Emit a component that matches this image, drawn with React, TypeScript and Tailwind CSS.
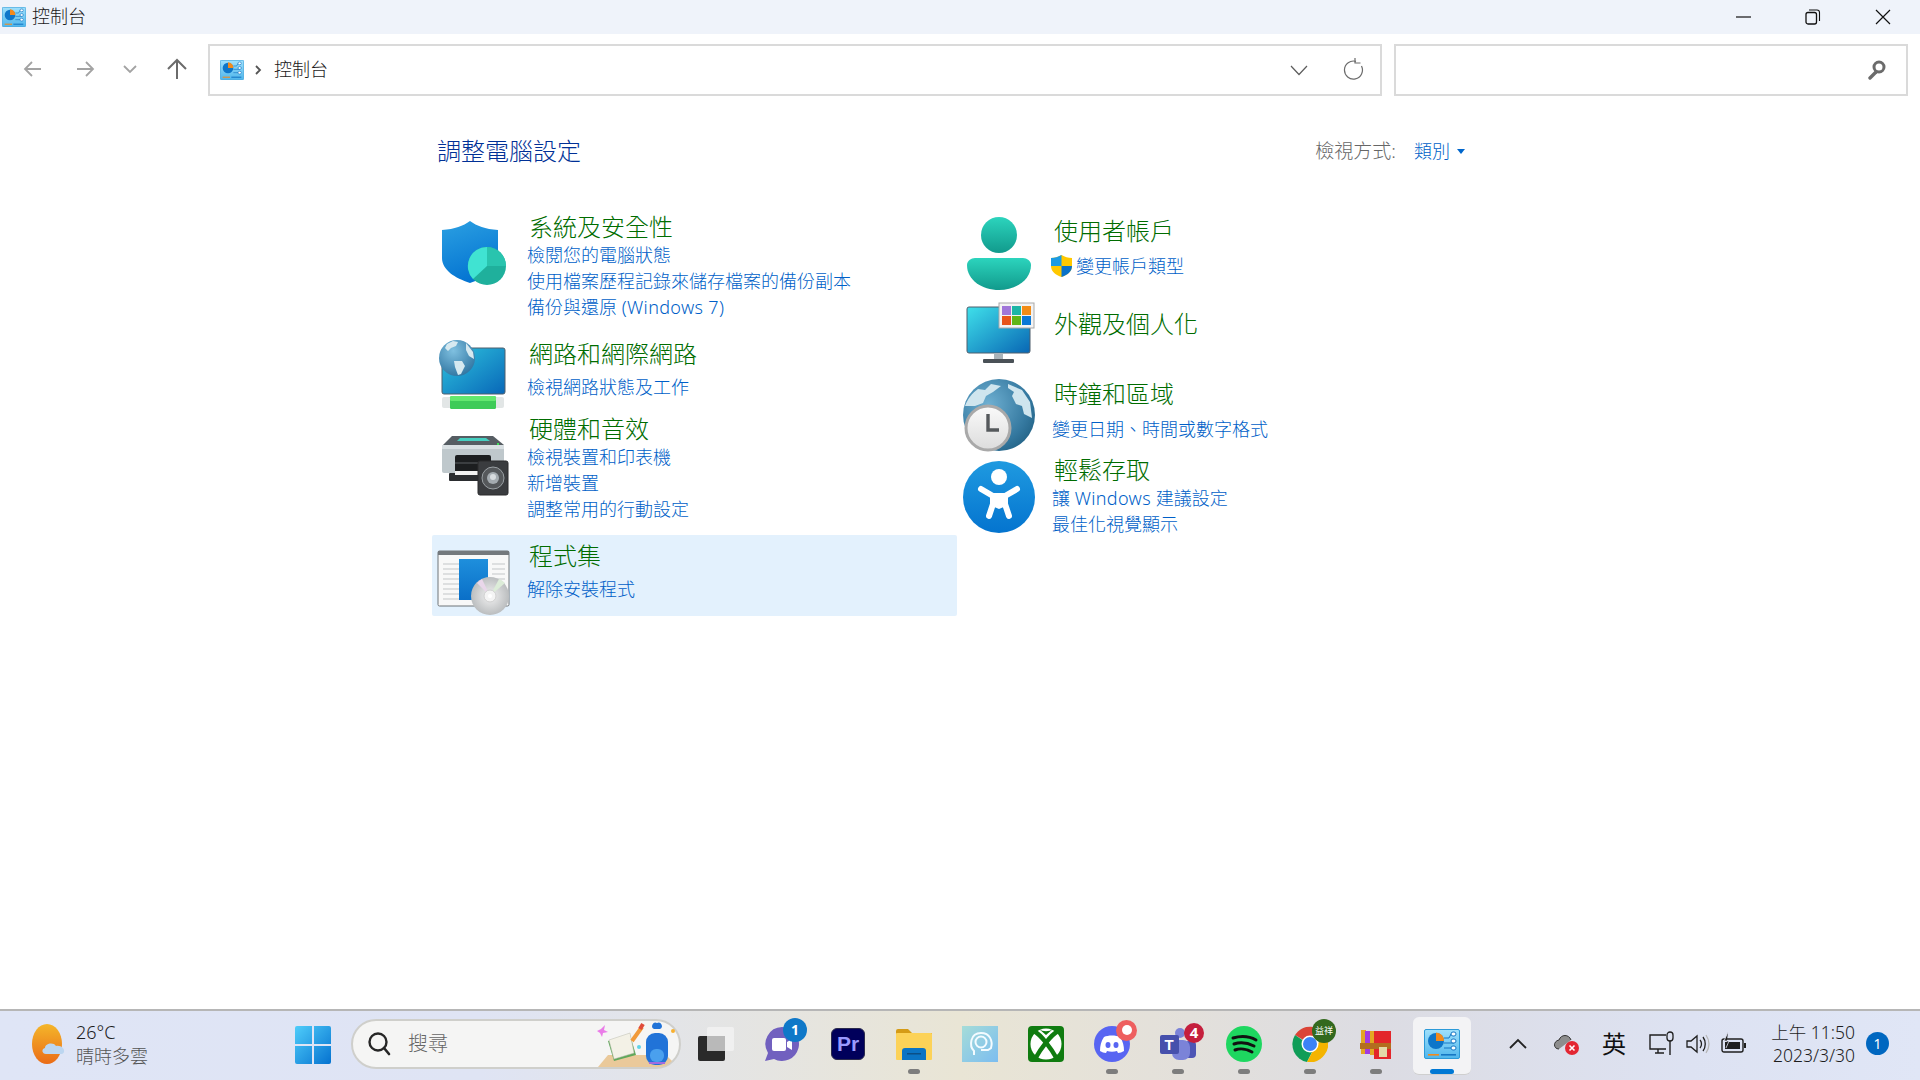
const CP = ({ w = 24, h = 20 }: { w?: number; h?: number }) => (
  <svg width={w} height={h} viewBox="0 0 36 30">
    <defs>
      <linearGradient id="cp" x1="0" y1="0" x2="0" y2="1">
        <stop offset="0" stopColor="#9fe0fb" />
        <stop offset="1" stopColor="#4fb6ec" />
      </linearGradient>
    </defs>
    <rect x="0.5" y="0.5" width="35" height="29" rx="1.5" fill="url(#cp)" stroke="#2c9ad8" />
    <circle cx="12" cy="12" r="8" fill="#0e76c9" />
    <path d="M12 12V3.5A8 8 0 0 1 20 12Z" fill="#f28a1c" />
    <path d="M20 9h5l2-4h3M20 14h10M20 19h10" stroke="#1677c4" strokeWidth="1" fill="none" />
    <rect x="27" y="3" width="5" height="4" rx="2" fill="#fff" stroke="#1677c4" />
    <rect x="27" y="10" width="5" height="4" rx="2" fill="#fff" stroke="#1677c4" />
    <rect x="27" y="17" width="5" height="4" rx="2" fill="#fff" stroke="#1677c4" />
    <rect x="4" y="25" width="11" height="1.6" fill="#f28a1c" />
    <rect x="17" y="25" width="15" height="1.6" fill="#1677c4" />
  </svg>
);

const ShieldIcon = () => (
  <svg width="66" height="68" viewBox="0 0 66 68" className="block ml-[9px] mt-[9px]">
    <defs>
      <linearGradient id="sh" x1="0" y1="0" x2="0.3" y2="1">
        <stop offset="0" stopColor="#2ba0e2" />
        <stop offset="1" stopColor="#0575d2" />
      </linearGradient>
    </defs>
    <path d="M29 1C36 6 44 9 57 10V38C57 50 44 58 29 63C14 58 1 50 1 38V10C14 9 22 6 29 1Z" fill="url(#sh)" />
    <circle cx="46" cy="46" r="19" fill="#1fb09c" />
    <path d="M46 46V27A19 19 0 0 1 65 46Z" fill="#29c4ae" />
    <path d="M46 46V27A19 19 0 0 0 32 59Z" fill="#40e3d2" />
  </svg>
);

const NetworkIcon = () => (
  <svg width="72" height="72" viewBox="0 0 72 72" className="block ml-[6px] mt-[1px]">
    <defs>
      <linearGradient id="nt" x1="0" y1="0" x2="1" y2="1">
        <stop offset="0" stopColor="#2fc4de" />
        <stop offset="1" stopColor="#0867b8" />
      </linearGradient>
      <radialGradient id="gl1" cx="0.4" cy="0.3" r="0.8">
        <stop offset="0" stopColor="#7fc0e0" />
        <stop offset="1" stopColor="#2a6f9c" />
      </radialGradient>
    </defs>
    <rect x="4" y="9" width="63" height="46" rx="2" fill="url(#nt)" stroke="#4f5f6c" />
    <rect x="4" y="58" width="62" height="11" rx="2" fill="#e2e6e6" />
    <rect x="12" y="57" width="46" height="13" rx="1.5" fill="#3ecb58" />
    <rect x="12" y="57" width="46" height="5" rx="1.5" fill="#63e86f" />
    <circle cx="19" cy="19" r="18" fill="url(#gl1)" />
    <path d="M9 5l6-3 5 1-2 4-5 2-3 3-3-3zM28 4l7 9 1 7-5-3-3-6zM16 22l8 0 3 5-4 8-3 1-3-8z" fill="#d6e9f0" />
  </svg>
);

const HardwareIcon = () => (
  <svg width="72" height="62" viewBox="0 0 72 62" className="block ml-[9px] mt-[22px]">
    <path d="M2 10L11 1H52L63 10Z" fill="#565d63" />
    <path d="M16 6l3-3h26l4 3z" fill="#45cfc0" />
    <rect x="1" y="10" width="62" height="28" rx="2" fill="#bfc8cc" />
    <rect x="1" y="10" width="62" height="4" fill="#d9e0e3" />
    <rect x="56" y="8" width="2" height="2" fill="#3fdc5b" />
    <rect x="14" y="20" width="36" height="22" rx="2" fill="#1c1e20" />
    <rect x="14" y="27" width="36" height="2" fill="#3b3e41" />
    <rect x="8" y="38" width="50" height="8" rx="1" fill="#2b2d30" />
    <rect x="14" y="36" width="36" height="4" fill="#f2f2f2" />
    <rect x="37" y="26" width="30" height="34" rx="2" fill="#3a3c3f" stroke="#2a2b2d" />
    <circle cx="52" cy="43" r="11" fill="#55585b" stroke="#9aa0a4" strokeWidth="1" />
    <circle cx="52" cy="43" r="6" fill="#a4abb0" />
    <circle cx="52" cy="42" r="3" fill="#d7dbde" />
  </svg>
);

const ProgramsIcon = () => (
  <svg width="74" height="66" viewBox="0 0 74 66" className="block ml-[5px] mt-[10px]">
    <defs>
      <linearGradient id="pg" x1="0" y1="0" x2="0" y2="1">
        <stop offset="0" stopColor="#1e8fdc" />
        <stop offset="1" stopColor="#0a6fc8" />
      </linearGradient>
      <radialGradient id="cd" cx="0.5" cy="0.5" r="0.6">
        <stop offset="0" stopColor="#f2f2f2" />
        <stop offset="1" stopColor="#b0b3b5" />
      </radialGradient>
    </defs>
    <rect x="1" y="1" width="71" height="55" rx="1.5" fill="#f8f8f8" stroke="#6f7478" />
    <rect x="1" y="1" width="71" height="4" fill="#74797d" />
    <path d="M6 14h16M6 19h16M6 24h16M6 29h16M6 34h16M6 39h16M6 44h16M6 49h16M55 14h13M55 19h13M55 24h13M55 29h13M55 34h13" stroke="#c3c6c8" strokeWidth="1" />
    <rect x="22" y="9" width="29" height="41" fill="url(#pg)" />
    <circle cx="53" cy="46" r="19" fill="url(#cd)" />
    <path d="M53 46L40 33A19 19 0 0 1 45 29Z" fill="#e9d7ea" />
    <path d="M53 46L68 33A19 19 0 0 0 62 29Z" fill="#dcecd8" />
    <circle cx="53" cy="46" r="6" fill="#f4f4f4" stroke="#d0d0d0" />
    <circle cx="53" cy="46" r="2" fill="#fff" />
  </svg>
);

const UserIcon = () => (
  <svg width="66" height="74" viewBox="0 0 66 74" className="block ml-[10px] mt-[2px]">
    <defs>
      <linearGradient id="us" x1="0" y1="0" x2="0" y2="1">
        <stop offset="0" stopColor="#2cd4bd" />
        <stop offset="1" stopColor="#119a8c" />
      </linearGradient>
    </defs>
    <circle cx="33" cy="18" r="18" fill="url(#us)" />
    <path d="M9 41H57C61 41 65 44 65 48C65 63 50 73 33 73C16 73 1 63 1 48C1 44 5 41 9 41Z" fill="url(#us)" />
  </svg>
);

const AppearanceIcon = () => (
  <svg width="72" height="64" viewBox="0 0 72 64" className="block ml-[10px] -mt-[6px]">
    <defs>
      <linearGradient id="ap" x1="0" y1="0" x2="1" y2="1">
        <stop offset="0" stopColor="#3fe0ea" />
        <stop offset="1" stopColor="#0866b4" />
      </linearGradient>
    </defs>
    <rect x="1" y="5" width="63" height="46" rx="2" fill="url(#ap)" stroke="#4f5f6c" />
    <rect x="28" y="51" width="9" height="7" fill="#a9b3b9" />
    <rect x="17" y="57" width="31" height="4" rx="1" fill="#4a5157" />
    <rect x="33" y="1" width="35" height="25" fill="#f3f3f3" stroke="#a9a9a9" />
    <rect x="36" y="4" width="9" height="9" fill="#a076d9" />
    <rect x="46" y="4" width="9" height="9" fill="#1cb5a6" />
    <rect x="56" y="4" width="9" height="9" fill="#f28c16" />
    <rect x="36" y="14" width="9" height="9" fill="#e8541a" />
    <rect x="46" y="14" width="9" height="9" fill="#5fb516" />
    <rect x="56" y="14" width="9" height="9" fill="#0a78d6" />
  </svg>
);

const ClockIcon = () => (
  <svg width="74" height="74" viewBox="0 0 74 74" className="block ml-[6px]">
    <defs>
      <radialGradient id="gl2" cx="0.35" cy="0.35" r="0.8">
        <stop offset="0" stopColor="#6fb0d2" />
        <stop offset="0.7" stopColor="#34789f" />
        <stop offset="1" stopColor="#1f5d80" />
      </radialGradient>
      <linearGradient id="cf" x1="0" y1="0" x2="0" y2="1">
        <stop offset="0" stopColor="#fafafa" />
        <stop offset="1" stopColor="#dcdcdc" />
      </linearGradient>
    </defs>
    <circle cx="37" cy="37" r="36" fill="url(#gl2)" />
    <path d="M3 28c2-6 7-13 13-17l7 1 6-6 10 2-8 6-7 4-3 7-8 3-7 0zM46 6l14 6 8 12 2 16-8-4-2-8-6-2-4-8 2-4-6-4z" fill="#cfe5ee" />
    <circle cx="26" cy="50" r="22" fill="url(#cf)" stroke="#a9a9a9" strokeWidth="3" />
    <path d="M26 36V52H37" fill="none" stroke="#55595c" strokeWidth="3.4" />
  </svg>
);

const EaseIcon = () => (
  <svg width="74" height="74" viewBox="0 0 74 74" className="block ml-[6px] mt-[6px]">
    <defs>
      <linearGradient id="ea" x1="0" y1="0" x2="0" y2="1">
        <stop offset="0" stopColor="#1f9ae0" />
        <stop offset="1" stopColor="#0474cf" />
      </linearGradient>
    </defs>
    <circle cx="37" cy="37" r="36" fill="url(#ea)" />
    <circle cx="37" cy="17" r="8" fill="#fff" />
    <path d="M19 29L31 36V44L27 56M55 29L43 36V44L47 56" fill="none" stroke="#fff" strokeWidth="6" strokeLinecap="round" strokeLinejoin="round" />
    <path d="M30 33H44V46L37 49L30 46Z" fill="#fff" />
  </svg>
);

const UacShield = () => (
  <svg width="23" height="24" viewBox="0 0 23 24">
    <path d="M11.5 1C15 3 18 4 22 4V12C22 18 17 21 11.5 23C6 21 1 18 1 12V4C5 4 8 3 11.5 1Z" fill="#ffc800" />
    <path d="M11.5 1V12H1V4C5 4 8 3 11.5 1Z" fill="#1b9be3" />
    <path d="M11.5 12H22C22 18 17 21 11.5 23Z" fill="#0a72c9" />
  </svg>
);

function Category({
  title,
  links,
  icon,
  className,
  gap,
  rightCol,
}: {
  title: string;
  links: React.ReactNode[];
  icon: React.ReactNode;
  className: string;
  gap: string;
  rightCol?: boolean;
}) {
  return (
    <div className={`flex ${className}`}>
      <div className={`h-0 shrink-0 ${rightCol ? 'w-[98px]' : 'w-[97px]'}`}>{icon}</div>
      <div>
        <div className="text-[24px] leading-[32px] text-[#006c00] font-light">{title}</div>
        <div className={gap}>
          {links.map((l, i) => (
            <div key={i} className="text-[18px] leading-[26px] text-[#005fc8] -ml-[2px] font-light">
              {l}
            </div>
          ))}
        </div>
      </div>
    </div>
  );
}

const TaskIcon = ({ children, dot, active }: { children: React.ReactNode; dot?: boolean; active?: boolean }) => (
  <div className="w-[66px] h-[58px] flex items-center justify-center relative">
    {active && <div className="absolute inset-x-[4px] inset-y-0 bg-[#f3f3f5] rounded-[6px] border-b border-[#cfcfcf]" />}
    <div className="relative -mt-[4px]">{children}</div>
    {dot && <div className="absolute bottom-[1px] left-[27px] w-[12px] h-[5px] rounded-full bg-[#7d7d7d]" />}
    {active && <div className="absolute bottom-[1px] left-[21px] w-[24px] h-[5px] rounded-full bg-[#0078d4]" />}
  </div>
);

const Badge = ({ className, children }: { className: string; children?: React.ReactNode }) => (
  <div className={`absolute rounded-full flex items-center justify-center text-white font-bold ${className}`}>{children}</div>
);

export default function App() {
  return (
    <div className="w-[1920px] h-[1080px] overflow-hidden flex flex-col bg-white font-['Noto_Sans','Noto_Sans_CJK_TC',sans-serif] text-[#1a1a1a]">
      {/* title bar */}
      <header className="h-[34px] bg-[#eff3fa] flex items-center shrink-0">
        <div className="ml-[2px]">
          <CP />
        </div>
        <span className="ml-[6px] text-[18px] leading-none mb-[2px] font-light">控制台</span>
        <div className="ml-auto flex items-center">
          <svg width="16" height="16" viewBox="0 0 16 16" className="mr-[53px]">
            <path d="M0 8H15" stroke="#111" strokeWidth="1.2" />
          </svg>
          <svg width="16" height="16" viewBox="0 0 16 16" className="mr-[54px]">
            <rect x="1" y="3.5" width="10.5" height="11.5" rx="2" fill="none" stroke="#111" strokeWidth="1.3" />
            <path d="M4 1H12C13.5 1 14.5 2 14.5 3.5V12" fill="none" stroke="#111" strokeWidth="1.1" />
          </svg>
          <svg width="16" height="16" viewBox="0 0 16 16" className="mr-[29px]">
            <path d="M1 1L15 15M15 1L1 15" stroke="#111" strokeWidth="1.2" />
          </svg>
        </div>
      </header>

      {/* address row */}
      <div className="h-[66px] shrink-0 flex items-center pt-[4px]">
        <svg width="20" height="18" viewBox="0 0 20 18" className="ml-[23px]">
          <path d="M18 9H2M9 2L2 9L9 16" fill="none" stroke="#a3a3a3" strokeWidth="1.8" />
        </svg>
        <svg width="20" height="18" viewBox="0 0 20 18" className="ml-[33px]">
          <path d="M1 9H17M10 2L17 9L10 16" fill="none" stroke="#a3a3a3" strokeWidth="1.8" />
        </svg>
        <svg width="14" height="10" viewBox="0 0 14 10" className="ml-[27px]">
          <path d="M1 2L7 8L13 2" fill="none" stroke="#a3a3a3" strokeWidth="1.8" />
        </svg>
        <svg width="20" height="22" viewBox="0 0 20 22" className="ml-[30px]">
          <path d="M10 21V2M1 11L10 2L19 11" fill="none" stroke="#6b6b6b" strokeWidth="2" />
        </svg>
        <div className="ml-[21px] w-[1174px] h-[52px] border-2 border-[#dadada] flex items-center mt-[2px]">
          <div className="ml-[10px]">
            <CP />
          </div>
          <svg width="7" height="10" viewBox="0 0 7 10" className="ml-[11px]">
            <path d="M1 1L5 5L1 9" fill="none" stroke="#555" strokeWidth="1.8" />
          </svg>
          <span className="ml-[12px] text-[18px] leading-none mb-[2px] font-light">控制台</span>
          <svg width="18" height="11" viewBox="0 0 18 11" className="ml-auto">
            <path d="M1 1L9 9.5L17 1" fill="none" stroke="#5c5c5c" strokeWidth="1.2" />
          </svg>
          <svg width="22" height="24" viewBox="0 0 22 24" className="ml-[34px] mr-[16px]">
            <path d="M14 3.4A9 9 0 1 0 19.5 8" fill="none" stroke="#6b6b6b" strokeWidth="1.2" />
            <path d="M13 0V5H18.5" fill="none" stroke="#6b6b6b" strokeWidth="1.2" />
          </svg>
        </div>
        <div className="ml-[12px] w-[514px] h-[52px] border-2 border-[#dadada] flex items-center justify-end mt-[2px]">
          <svg width="18" height="20" viewBox="0 0 18 20" className="mr-[20px]">
            <circle cx="11" cy="7" r="5" fill="none" stroke="#6b6b6b" strokeWidth="3" />
            <path d="M8 12L2 18" stroke="#6b6b6b" strokeWidth="3.4" strokeLinecap="round" />
          </svg>
        </div>
      </div>

      {/* content */}
      <main className="flex-1 min-h-0">
        <div className="ml-[437px] w-[1028px] mt-[34px] flex items-center h-[34px]">
          <h1 className="text-[24px] leading-[34px] text-[#003096] font-light">調整電腦設定</h1>
          <div className="ml-auto flex items-center font-light mt-[1px]">
            <span className="text-[19px] text-[#666]">檢視方式:</span>
            <span className="ml-[18px] text-[18px] text-[#005fc8]">類別</span>
            <svg width="8" height="5" viewBox="0 0 8 5" className="ml-[7px]">
              <path d="M0 0H8L4 5Z" fill="#0066cc" />
            </svg>
          </div>
        </div>
        <div className="flex ml-[432px] mt-[43px]">
          <div className="w-[525px] flex flex-col">
            <Category
              className="h-[109px]"
              gap="-mt-px"
              title="系統及安全性"
              icon={<ShieldIcon />}
              links={[
                '檢閱您的電腦狀態',
                '使用檔案歷程記錄來儲存檔案的備份副本',
                <>
                  備份與還原 <span className="tracking-[0.35px]">(Windows 7)</span>
                </>,
              ]}
            />
            <Category
              className="h-[62px] mt-[18px]"
              gap="mt-[4px]"
              title="網路和網際網路"
              icon={<NetworkIcon />}
              links={['檢視網路狀態及工作']}
            />
            <Category
              className="h-[110px] mt-[13px]"
              gap="-mt-px"
              title="硬體和音效"
              icon={<HardwareIcon />}
              links={['檢視裝置和印表機', '新增裝置', '調整常用的行動設定']}
            />
            <Category
              className="h-[81px] mt-[12px] pt-[5px] bg-[#e3f1fd] rounded-[2px]"
              gap="mt-[4px]"
              title="程式集"
              icon={<ProgramsIcon />}
              links={['解除安裝程式']}
            />
          </div>
          <div className="flex flex-col -ml-px">
            <Category
              rightCol
              className="h-[64px] mt-[4px]"
              gap="mt-[6px]"
              title="使用者帳戶"
              icon={<UserIcon />}
              links={[
                <span className="flex items-center -ml-[2px]">
                  <UacShield />
                  <span className="ml-[3px]">變更帳戶類型</span>
                </span>,
              ]}
            />
            <Category rightCol className="h-[32px] mt-[29px]" gap="" title="外觀及個人化" icon={<AppearanceIcon />} links={[]} />
            <Category
              rightCol
              className="h-[64px] mt-[38px]"
              gap="mt-[6px]"
              title="時鐘和區域"
              icon={<ClockIcon />}
              links={['變更日期、時間或數字格式']}
            />
            <Category
              rightCol
              className="h-[83px] mt-[12px]"
              gap="-mt-px"
              title="輕鬆存取"
              icon={<EaseIcon />}
              links={[
                <>
                  讓 <span className="tracking-[0.35px]">Windows</span> 建議設定
                </>,
                '最佳化視覺顯示',
              ]}
            />
          </div>
        </div>
      </main>

      {/* taskbar */}
      <footer className="h-[71px] shrink-0 border-t-2 border-[#b6b6b6] bg-[linear-gradient(90deg,#dfe5f6_0%,#dfe4f4_25%,#e9e5d5_50%,#e3e0db_62%,#dcdce3_72%,#dde2f2_88%,#e0e6f6_100%)] flex items-center pb-[4px]">
        <svg width="34" height="40" viewBox="0 0 34 40" className="ml-[32px]">
          <defs>
            <linearGradient id="sun" x1="0" y1="0" x2="0" y2="1">
              <stop offset="0" stopColor="#f4b62a" />
              <stop offset="1" stopColor="#ea6c17" />
            </linearGradient>
          </defs>
          <ellipse cx="15" cy="20" rx="15" ry="20" fill="url(#sun)" />
          <path d="M14 30C10 30 9 25 13 24C13 19 22 18 24 22C29 21 33 25 32 28C31 30 30 30 28 30Z" fill="#bcd6f0" />
        </svg>
        <div className="ml-[10px] w-[186px] flex flex-col leading-[24px] font-light">
          <span className="text-[18px] text-[#1d1d1d]">26°C</span>
          <span className="text-[18px] text-[#555]">晴時多雲</span>
        </div>
        <svg width="36" height="38" viewBox="0 0 36 38" className="ml-[33px] mt-[2px]">
          <defs>
            <linearGradient id="wn" x1="0" y1="0" x2="1" y2="1">
              <stop offset="0" stopColor="#4fcdfa" />
              <stop offset="1" stopColor="#0572d0" />
            </linearGradient>
          </defs>
          <path d="M0 2a2 2 0 0 1 2-2H17V18H0ZM19 0H34a2 2 0 0 1 2 2V18H19ZM0 20H17V38H2a2 2 0 0 1-2-2ZM19 20H36V36a2 2 0 0 1-2 2H19Z" fill="url(#wn)" />
        </svg>
        <div className="ml-[20px] w-[330px] h-[50px] rounded-full bg-[#f5f5f4] border-2 border-[#cfcfcb] flex items-center">
          <svg width="24" height="26" viewBox="0 0 24 26" className="ml-[14px]">
            <circle cx="11" cy="11" r="8.5" fill="none" stroke="#262626" strokeWidth="2.4" />
            <path d="M17 17L22 23" stroke="#262626" strokeWidth="2.6" strokeLinecap="round" />
          </svg>
          <span className="ml-[17px] text-[20px] text-[#666] leading-none font-light">搜尋</span>
          <svg width="82" height="46" viewBox="0 0 82 46" className="ml-auto mr-[1px]">
            <path d="M2 46L12 34H70L76 40C72 44 68 46 60 46Z" fill="#eac99a" />
            <path d="M12 20L34 14L40 34L18 40Z" fill="#5fa85a" />
            <path d="M13 19L34 12L38 32L18 38Z" fill="#f3f1e6" stroke="#bdbdb0" strokeWidth="0.5" />
            <path d="M36 20L46 6" stroke="#f19a3a" strokeWidth="4" />
            <path d="M44 8L47 3" stroke="#e04b3a" strokeWidth="4" />
            <path d="M5 8L9 4L8 9L12 11L7 12L6 16L4 12L1 10Z" fill="#ea7ce8" />
            <rect x="50" y="12" width="22" height="32" rx="9" fill="#2173d8" />
            <path d="M61 2a3 3 0 0 1 3 6h-6a3 3 0 0 1 3-6Z" fill="#2173d8" />
            <rect x="54" y="28" width="14" height="13" rx="6" fill="#4aa0ee" />
            <path d="M53 42H69" stroke="#a06be0" strokeWidth="2" />
            <circle cx="77" cy="10" r="2" fill="#f8b02f" />
            <circle cx="43" cy="26" r="2" fill="#5fd3e8" />
          </svg>
        </div>

        <div className="flex items-center mt-[4px] ml-[2px]">
          <TaskIcon>
            <svg width="36" height="36" viewBox="0 0 36 36">
              <rect x="0" y="10" width="27" height="25" rx="2" fill="#2a2a2a" />
              <rect x="9" y="1" width="27" height="24" rx="2" fill="#f2f2f2" fillOpacity="0.85" />
              <rect x="9" y="10" width="18" height="15" fill="#b9b9b9" />
            </svg>
          </TaskIcon>
          <TaskIcon>
            <svg width="36" height="36" viewBox="0 0 36 36">
              <path d="M18 1A17 17 0 1 1 10 33L1 35L4 27A17 17 0 0 1 18 1Z" fill="#7160bf" />
              <rect x="8" y="12" width="14" height="13" rx="2" fill="#fff" />
              <path d="M23 16L28 13V24L23 21Z" fill="#fff" />
            </svg>
            <Badge className="w-[24px] h-[24px] -top-[8px] left-[19px] bg-[#0f78c8] text-[14px]">1</Badge>
          </TaskIcon>
          <TaskIcon>
            <div className="w-[34px] h-[32px] rounded-[6px] bg-[#00005b] border border-[#2b2b4d] flex items-center justify-center text-[#9a9aff] text-[21px] font-bold leading-none font-['Liberation_Sans',sans-serif]">
              Pr
            </div>
          </TaskIcon>
          <TaskIcon dot>
            <svg width="36" height="32" viewBox="0 0 36 32">
              <path d="M0 3a2 2 0 0 1 2-2H12L16 5H36V10H0Z" fill="#d59b16" />
              <rect x="0" y="5" width="36" height="27" rx="1" fill="#fcd258" />
              <path d="M6 32V23a3 3 0 0 1 3-3H27a3 3 0 0 1 3 3V32Z" fill="#0b74c4" />
              <rect x="11" y="25" width="14" height="1.5" fill="#0b4f86" />
            </svg>
          </TaskIcon>
          <TaskIcon>
            <svg width="36" height="36" viewBox="0 0 36 36">
              <defs>
                <linearGradient id="lp" x1="0" y1="0" x2="1" y2="1">
                  <stop offset="0" stopColor="#a5dcd8" />
                  <stop offset="1" stopColor="#7cbdf0" />
                </linearGradient>
              </defs>
              <rect width="36" height="36" fill="url(#lp)" />
              <path d="M12 29V25C7 20 8 7 19 7C28 7 31 15 29 22L26 24H19" fill="none" stroke="#f3fbff" strokeWidth="2" />
              <circle cx="19" cy="16" r="5.5" fill="none" stroke="#f3fbff" strokeWidth="2" />
            </svg>
          </TaskIcon>
          <TaskIcon>
            <svg width="36" height="36" viewBox="0 0 36 36">
              <rect width="36" height="36" rx="4" fill="#107c10" />
              <circle cx="18" cy="18" r="15.5" fill="#fff" />
              <path d="M6 5C13 9 23 22 29 33M30 5C23 9 13 22 7 33" fill="none" stroke="#107c10" strokeWidth="4.5" />
              <path d="M11 3C15 6 21 6 25 3L18 9Z" fill="#107c10" />
            </svg>
          </TaskIcon>
          <TaskIcon dot>
            <svg width="36" height="36" viewBox="0 0 36 36">
              <circle cx="18" cy="18" r="18" fill="#5865f2" />
              <path d="M10 11C14 9 22 9 26 11C29 15 30 20 30 25C28 26 26 27 24 27L23 25C20 26 16 26 13 25L12 27C10 27 8 26 6 25C6 20 7 15 10 11Z" fill="#fff" />
              <ellipse cx="14" cy="19" rx="2.5" ry="3" fill="#5865f2" />
              <ellipse cx="22" cy="19" rx="2.5" ry="3" fill="#5865f2" />
            </svg>
            <Badge className="w-[21px] h-[21px] -top-[6px] left-[22px] bg-[#ee5f5f]">
              <span className="w-[10px] h-[10px] rounded-full bg-white" />
            </Badge>
          </TaskIcon>
          <TaskIcon dot>
            <svg width="36" height="32" viewBox="0 0 36 32">
              <circle cx="20" cy="5" r="5" fill="#7b83d8" />
              <circle cx="31" cy="8" r="4" fill="#4d55b5" />
              <rect x="25" y="13" width="11" height="17" rx="4" fill="#4d55b5" />
              <rect x="12" y="12" width="18" height="20" rx="7" fill="#7b83d8" />
              <rect x="0" y="7" width="19" height="19" rx="2" fill="#4650ac" />
              <text x="4.5" y="22" fontSize="15" fontWeight="700" fill="#fff" fontFamily="Liberation Sans">T</text>
            </svg>
            <Badge className="w-[20px] h-[20px] -top-[5px] left-[24px] bg-[#c51f3d] text-[15px]">4</Badge>
          </TaskIcon>
          <TaskIcon dot>
            <svg width="36" height="36" viewBox="0 0 36 36">
              <circle cx="18" cy="18" r="18" fill="#1ed760" />
              <path d="M7 12C14 10 23 10 30 14M8 18C14 16 22 17 28 20M9 24C14 22 21 23 26 26" fill="none" stroke="#111" strokeWidth="3" strokeLinecap="round" />
            </svg>
          </TaskIcon>
          <TaskIcon dot>
            <svg width="36" height="36" viewBox="0 0 36 36">
              <path d="M18 18L3 9A18 18 0 0 1 34 10Z" fill="#db4437" />
              <path d="M3 9A18 18 0 0 0 15 36L22 22Z" fill="#0f9d58" />
              <path d="M34 10A18 18 0 0 1 15 36L24 19Z" fill="#f4b400" />
              <circle cx="18" cy="18" r="8.5" fill="#fff" />
              <circle cx="18" cy="18" r="7" fill="#3b82f6" />
            </svg>
            <Badge className="w-[24px] h-[24px] -top-[7px] left-[20px] bg-[#33691e] text-[9px] font-normal text-[#cfdcc4]">益祥</Badge>
          </TaskIcon>
          <TaskIcon dot>
            <svg width="32" height="32" viewBox="0 0 32 32">
              <rect x="1" y="2" width="5" height="24" fill="#e3a722" />
              <rect x="5" y="3" width="5" height="23" fill="#a23ae0" />
              <rect x="10" y="3" width="5" height="24" fill="#e3a722" />
              <rect x="14" y="3" width="17" height="28" fill="#e3262b" />
              <rect x="0" y="15" width="31" height="6" fill="#b36d1f" />
              <rect x="19" y="19" width="8" height="10" fill="#e3d9a8" />
            </svg>
          </TaskIcon>
          <TaskIcon active>
            <CP w={36} h={30} />
          </TaskIcon>
        </div>

        <svg width="20" height="12" viewBox="0 0 20 12" className="ml-[33px]">
          <path d="M2 10L10 2L18 10" fill="none" stroke="#222" strokeWidth="1.8" />
        </svg>
        <svg width="28" height="24" viewBox="0 0 28 24" className="ml-[24px]">
          <path d="M7 17C1 17 1 9 7 8C9 2 17 2 19 8" fill="#8d8d8d" stroke="#333" strokeWidth="1" />
          <circle cx="20" cy="16" r="7" fill="#e32632" />
          <path d="M17.5 13.5L22.5 18.5M22.5 13.5L17.5 18.5" stroke="#fff" strokeWidth="1.6" />
        </svg>
        <span className="ml-[22px] text-[24px] leading-none text-[#111]">英</span>
        <svg width="26" height="26" viewBox="0 0 26 26" className="ml-[23px]">
          <path d="M17 4H1V18H17M6 22H15M9 18V22M21 10V24" fill="none" stroke="#1f1f1f" strokeWidth="1.4" />
          <rect x="18" y="1" width="6" height="9" rx="3" fill="none" stroke="#1f1f1f" strokeWidth="1.3" />
        </svg>
        <svg width="24" height="22" viewBox="0 0 24 22" className="ml-[11px]">
          <path d="M1 8H5L11 3V19L5 14H1Z" fill="none" stroke="#1f1f1f" strokeWidth="1.3" />
          <path d="M14 7C16 9 16 13 14 15M17 4C20 8 20 14 17 18" fill="none" stroke="#1f1f1f" strokeWidth="1.3" />
          <path d="M20 2C24 8 24 14 20 20" fill="none" stroke="#b5b5b5" strokeWidth="1.2" />
        </svg>
        <svg width="26" height="24" viewBox="0 0 26 24" className="ml-[11px]">
          <rect x="1" y="7" width="21" height="13" rx="2" fill="none" stroke="#1f1f1f" strokeWidth="1.4" />
          <rect x="4" y="10" width="15" height="7" fill="#1f1f1f" />
          <rect x="23" y="11" width="2" height="5" fill="#1f1f1f" />
          <path d="M7 0L3 9H8L5 16" fill="#1f1f1f" stroke="#e3e6f4" strokeWidth="0.8" />
        </svg>
        <div className="ml-[24px] flex flex-col items-end text-[17.5px] leading-[23px] text-[#1d1d1d] w-[84px] font-light">
          <span className="whitespace-nowrap">上午 11:50</span>
          <span className="whitespace-nowrap">2023/3/30</span>
        </div>
        <div className="ml-[11px] w-[23px] h-[23px] rounded-full bg-[#0067c0] text-white text-[14px] flex items-center justify-center">1</div>
      </footer>
    </div>
  );
}
